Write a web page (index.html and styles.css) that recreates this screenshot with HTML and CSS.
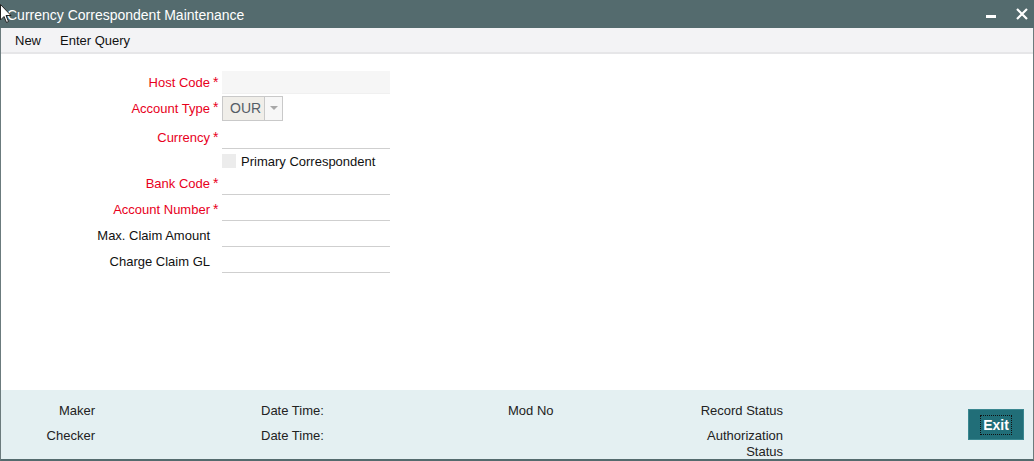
FILE: index.html
```html
<!DOCTYPE html>
<html lang="en">
<head>
  <meta charset="UTF-8">
  <title>Currency Correspondent Maintenance</title>
  <link rel="stylesheet" href="styles.css">
</head>
<body>

  <div class="window">
    <!-- Title bar -->
    <div class="titlebar">
      <span class="title">Currency Correspondent Maintenance</span>
      <div class="win-btns">
        <svg class="win-min" width="12" height="12" viewBox="0 0 12 12"><rect x="1" y="6" width="10" height="3" fill="#fff"/></svg>
        <svg class="win-close" width="12" height="12" viewBox="0 0 12 12"><path d="M1 1 L11 11 M11 1 L1 11" stroke="#fff" stroke-width="2.2"/></svg>
      </div>
    </div>

    <!-- Toolbar -->
    <div class="toolbar">
      <span>New</span>
      <span>Enter Query</span>
    </div>

    <!-- Form -->
    <div class="content">
      <div class="row row-host">
        <label class="req">Host Code</label><span class="star">*</span>
        <div class="field readonly"></div>
      </div>
      <div class="row row-select">
        <label class="req">Account Type</label><span class="star">*</span>
        <div class="select">
          <span class="select-val">OUR</span>
          <span class="select-btn"><svg width="8" height="5" viewBox="0 0 8 5"><path d="M0 0 L8 0 L4 4 Z" fill="#a8a8a8"/></svg></span>
        </div>
      </div>
      <div class="row">
        <label class="req">Currency</label><span class="star">*</span>
        <div class="field"></div>
      </div>
      <div class="row row-check">
        <label></label><span class="star"></span>
        <span class="checkbox"></span><span class="check-label">Primary Correspondent</span>
      </div>
      <div class="row">
        <label class="req">Bank Code</label><span class="star">*</span>
        <div class="field"></div>
      </div>
      <div class="row">
        <label class="req">Account Number</label><span class="star">*</span>
        <div class="field"></div>
      </div>
      <div class="row">
        <label>Max. Claim Amount</label><span class="star"></span>
        <div class="field"></div>
      </div>
      <div class="row">
        <label>Charge Claim GL</label><span class="star"></span>
        <div class="field"></div>
      </div>
    </div>

    <!-- Footer -->
    <div class="footer">
      <div class="audit">
        <span class="c1">Maker</span>
        <span class="c2">Date Time:</span>
        <span class="c3">Mod No</span>
        <span class="c4">Record Status</span>
        <span class="c1">Checker</span>
        <span class="c2">Date Time:</span>
        <span class="c4">Authorization<br>Status</span>
      </div>
      <button class="exit-btn"><span>Exit</span></button>
    </div>
  </div>

  <!-- mouse pointer -->
  <svg class="cursor" width="12" height="20" viewBox="0 0 12 20"><path d="M0.5 0.5 L0.5 16 L4 12.5 L6.5 18.5 L8.5 17.5 L6 11.5 L11 11.5 Z" fill="#fff" stroke="#222" stroke-width="1"/></svg>

</body>
</html>
```

FILE: styles.css
```css
/* Global */
body {
  margin: 0;
  padding: 0;
  background: #fff;
  font-family: "Liberation Sans", Arial, sans-serif;
  font-size: 13px;
  color: #111;
  overflow: hidden;
}

.window {
  width: 1034px;
  height: 461px;
  box-sizing: border-box;
  display: flex;
  flex-direction: column;
  border-left: 1px solid #6b7b7d;
  border-right: 1px solid #6b7b7d;
  border-bottom: 2px solid #546b6e;
}

/* Title bar */
.titlebar {
  height: 28px;
  background-color: #546b6e;
  color: #fff;
  display: flex;
  align-items: center;
  justify-content: space-between;
  padding: 0 6px 0 7px;
  margin: 0 -1px;
  flex-shrink: 0;
}

.title {
  font-size: 14px;
  padding-top: 2px;
}

.win-btns {
  display: flex;
  align-items: center;
  gap: 19px;
}

.win-min {
  margin-top: 1px;
}

/* Toolbar */
.toolbar {
  height: 24px;
  background-color: #f3f3f5;
  border-bottom: 2px solid #e6e6e8;
  display: flex;
  align-items: center;
  padding: 0 14px;
  gap: 19px;
  color: #111;
  flex-shrink: 0;
}

/* Form */
.content {
  flex: 1;
  padding-top: 17px;
}

.row {
  display: flex;
  align-items: center;
  height: 23px;
  margin-bottom: 3px;
}

.row label {
  width: 209px;
  text-align: right;
  color: #111;
}

.row label.req {
  color: #e8001c;
}

.star {
  width: 12px;
  padding-left: 3px;
  box-sizing: border-box;
  color: #e8001c;
  font-size: 14px;
  align-self: flex-start;
  margin-top: 3px;
}

.field {
  width: 168px;
  height: 22px;
  border-bottom: 1px solid #cfcfcf;
}

.field.readonly {
  background-color: #f6f6f6;
  border-bottom-color: #f0f0f0;
}

.row-host {
  margin-bottom: 2px;
}

.row-select {
  height: 25px;
  margin-bottom: 5px;
}

.select {
  width: 61px;
  height: 25px;
  box-sizing: border-box;
  border: 1px solid #c9c9c9;
  background-color: #f0eee9;
  display: flex;
}

.select-val {
  flex: 1;
  padding-left: 7px;
  line-height: 23px;
  color: #555d66;
  font-size: 14px;
}

.select-btn {
  width: 17px;
  border-left: 1px solid #c9c9c9;
  background-color: #f7f7f7;
  display: flex;
  align-items: center;
  justify-content: center;
}

.row-check {
  height: 17px;
}

.checkbox {
  width: 14px;
  height: 14px;
  background-color: #ececec;
  margin-right: 5px;
}

.check-label {
  color: #111;
  padding-top: 1px;
}

/* Footer */
.footer {
  height: 69px;
  background-color: #e4f0f2;
  display: flex;
  flex-shrink: 0;
}

.audit {
  display: grid;
  grid-template-columns: 94px 166px 247px 175px 100px;
  grid-template-rows: 25px auto;
  line-height: 16px;
  padding-top: 13px;
  color: #222;
}

.audit .c1 { grid-column: 1; text-align: right; }
.audit .c2 { grid-column: 3; }
.audit .c3 { grid-column: 4; }
.audit .c4 { grid-column: 5; text-align: right; }

.exit-btn {
  margin: 19px 9px 0 auto;
  width: 56px;
  height: 31px;
  background-color: #216e78;
  border: 1px solid #3a8790;
  color: #fff;
  font-family: "Liberation Sans", Arial, sans-serif;
  font-weight: bold;
  font-size: 14px;
  padding: 0;
  cursor: pointer;
}

.exit-btn span {
  display: inline-block;
  padding: 1px 2px;
  border: 1px dotted #111;
}

/* pointer overlay */
.cursor {
  position: absolute;
  left: 0;
  top: 4px;
}
```
